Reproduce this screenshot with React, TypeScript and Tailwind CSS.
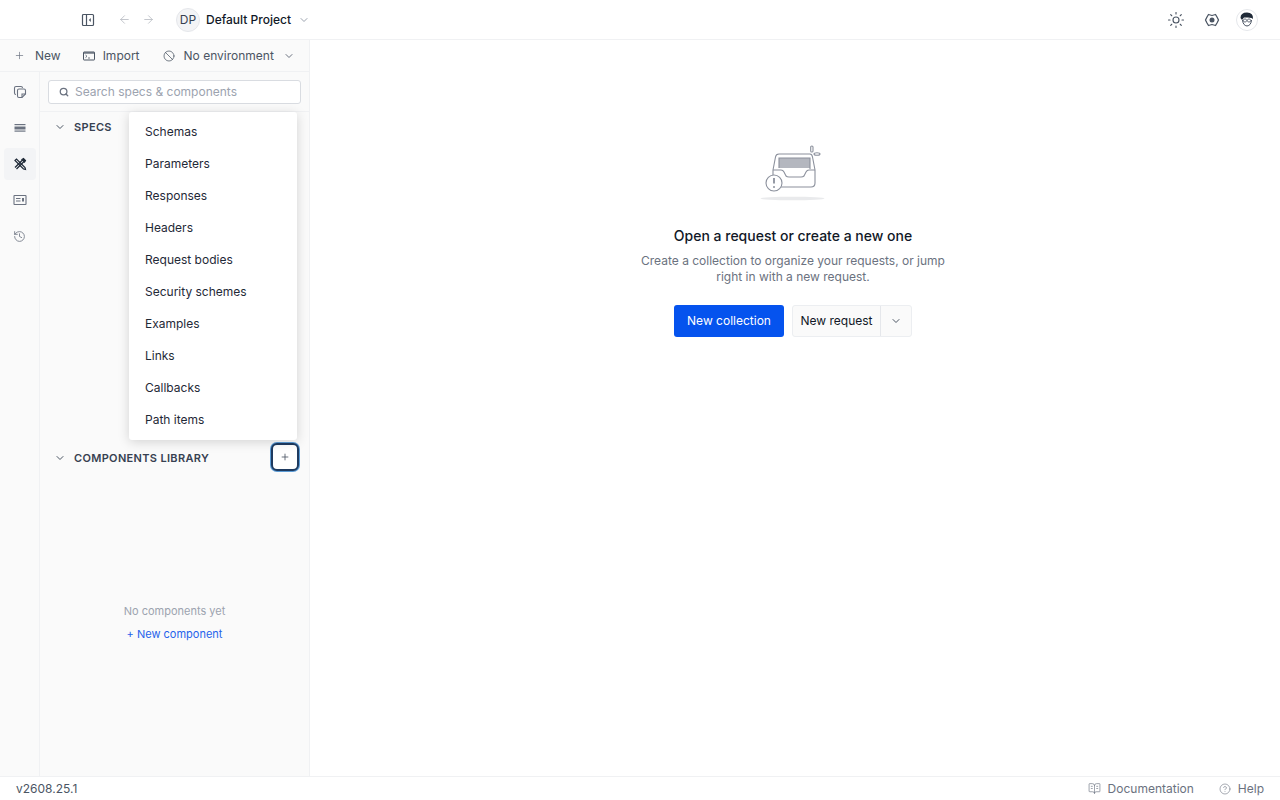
import { ArrowLeft, ArrowRight, Ban, BookOpenText, ChevronDown, CircleHelp, History, Plus, Search, Sun } from "lucide-react";

const menuItems = ["Schemas", "Parameters", "Responses", "Headers", "Request bodies", "Security schemes", "Examples", "Links", "Callbacks", "Path items"]

function InboxArt() {
    return (
        <svg width="72" height="60" viewBox="0 0 72 60" fill="none" stroke="#8b909c" strokeWidth="1.100">
            <ellipse cx="35.500" cy="53.500" rx="32" ry="1.800" fill="#e9eaec" stroke="none" />
            <rect x="22" y="13" width="31" height="10" fill="#b4b7bf" stroke="none" />
            <path d="M16 25 L18.500 12 Q19 9 22 9 L53 9 Q55 9 55.500 12 L58 25 L58 38 Q58 42 54 42 L24 42" />
            <path d="M22 23 L22 13 L53 13 L53 24" />
            <path d="M16 25 L16 30" />
            <path d="M16 25 L24 25 Q26 25 27 27 L29 31 Q30 32 32 32 L44 32 Q46 32 47 31 L49 27 Q50 25 52 25 L58 25" />
            <circle cx="17" cy="38" r="8" fill="#fff" />
            <path d="M17 33 L17 38.500" strokeWidth="1.800" />
            <circle cx="17" cy="42" r="1" fill="#8b909c" stroke="none" />
            <rect x="53.700" y="1" width="2.300" height="6" rx="1.100" />
            <ellipse cx="60" cy="9" rx="3" ry="1.300" />
        </svg>
    )
}

function Avatar() {
    return (
        <svg width="22" height="22" viewBox="0 0 22 22">
            <circle cx="11" cy="11" r="10.500" fill="#fff" stroke="#e5e7eb" />
            <path d="M6.500 11 Q7 16.500 11 17 Q15 16.500 15.500 11" fill="#fff" stroke="#374151" strokeWidth="0.900" />
            <path d="M4.500 9 Q4.500 3.500 11 3.500 Q17.500 3.500 17 10 L15.500 9 L12 8.500 L8 8.500 L6 11 Z" fill="#1f2937" />
            <circle cx="9" cy="11.500" r="1.600" fill="none" stroke="#374151" strokeWidth="0.700" />
            <circle cx="13" cy="11.500" r="1.600" fill="none" stroke="#374151" strokeWidth="0.700" />
        </svg>
    )
}

function SectionHead({ title }: { title: string }) {
    return (
        <div className="flex items-center h-[26px] pl-[14px] shrink-0">
            <ChevronDown size={12} strokeWidth={2} className="text-[#4b5563]" />
            <span className="ml-[8px] text-[11px] font-semibold tracking-[0.03em] text-[#374151]">{title}</span>
        </div>
    )
}

export default function App() {
    return (
        <div className="h-[800px] w-[1280px] flex flex-col bg-white overflow-hidden font-['Inter',sans-serif] text-[#111827]">
            {/* top bar */}
            <header className="h-10 shrink-0 border-b border-[#f0f1f3] flex items-center pl-[81px] pr-[22px]">
                <svg width="14" height="14" viewBox="0 0 14 14" fill="none" stroke="#4b5563" strokeWidth="1.200">
                    <rect x="1.500" y="1.500" width="11" height="11" rx="1" />
                    <path d="M5.500 1.500 V12.500" />
                    <path d="M9.800 5 L7.800 7 L9.800 9 Z" fill="#4b5563" stroke="none" />
                </svg>
                <ArrowLeft size={13} strokeWidth={1.500} className="ml-[23px] text-[#b6bac2]" />
                <ArrowRight size={13} strokeWidth={1.500} className="ml-[11px] text-[#b6bac2]" />
                <div className="ml-[21px] w-6 h-6 rounded-full bg-[#f3f4f6] border border-[#e5e7eb] flex items-center justify-center text-[12px] text-[#374151]">DP</div>
                <span className="ml-[6px] text-[12px] font-medium">Default Project</span>
                <ChevronDown size={12} className="ml-[7px] text-[#9ca3af]" />
                <div className="ml-auto flex items-center">
                    <Sun size={18} strokeWidth={1.500} className="text-[#4b5563]" />
                    <svg width="18" height="18" viewBox="0 0 18 18" fill="none" stroke="#4b5563" strokeWidth="1.300" className="ml-[18px]">
                        <path d="M5.500 3.500 L9 4.500 L12.500 3.500 L14 6 L15.500 9 L14 12 L12.500 14.500 L9 13.500 L5.500 14.500 L4 12 L2.500 9 L4 6 Z" strokeLinejoin="round" />
                        <circle cx="9" cy="9" r="2.500" fill="#4b5563" stroke="none" />
                    </svg>
                    <div className="ml-[15px] flex"><Avatar /></div>
                </div>
            </header>

            <div className="flex-1 flex min-h-0">
                {/* sidebar */}
                <aside className="relative w-[310px] shrink-0 border-r border-[#f0f1f3] bg-[#fafafa] flex flex-col">
                    <div className="h-8 shrink-0 flex items-center pl-[14px] border-b border-[#f0f1f3] text-[12px] text-[#4b5563] whitespace-nowrap">
                        <Plus size={11} strokeWidth={1.500} className="text-[#6b7280]" />
                        <span className="ml-[10px]">New</span>
                        <svg width="12" height="12" viewBox="0 0 12 12" fill="none" stroke="#4b5563" strokeWidth="1" className="ml-[22px]">
                            <rect x="0.500" y="2" width="11" height="8" rx="0.500" />
                            <path d="M0.500 3 H11.500" strokeWidth="1.200" />
                            <path d="M2.500 5 L4 6.300 L2.500 7.600 M5 8 H7" strokeWidth="0.800" />
                        </svg>
                        <span className="ml-[8px]">Import</span>
                        <Ban size={12} strokeWidth={1.500} className="ml-[23px] text-[#4b5563]" />
                        <span className="ml-[9px]">No environment</span>
                        <ChevronDown size={12} className="ml-[9px] text-[#6b7280]" />
                    </div>
                    <div className="flex-1 flex min-h-0">
                        {/* rail */}
                        <nav className="w-10 shrink-0 border-r border-[#f0f1f3] flex flex-col items-center pt-1 gap-1 text-[#6b7280]">
                            <div className="w-8 h-8 flex items-center justify-center">
                                <svg width="14" height="14" viewBox="0 0 14 14" fill="none" stroke="#6b7280" strokeWidth="1.100"><path d="M3 9.500 Q1.500 9.500 1.500 8 L1.500 3 Q1.500 1.500 3 1.500 L8 1.500 Q9.500 1.500 9.500 3" /><path d="M4.500 5.500 Q4.500 4 6 4 L11 4 Q12.500 4 12.500 5.500 L12.500 9 L9 12.500 L6 12.500 Q4.500 12.500 4.500 11 Z" /><path d="M12.500 9 L9 9 L9 12.500" /></svg>
                            </div>
                            <div className="w-8 h-8 flex items-center justify-center">
                                <svg width="14" height="14" viewBox="0 0 14 14" fill="#6b7280"><rect x="1.500" y="3" width="11" height="1.200" /><rect x="1.500" y="5.500" width="11" height="3" /><rect x="1.500" y="9.500" width="11" height="1.200" /></svg>
                            </div>
                            <div className="w-8 h-8 rounded bg-[#f3f4f6] flex items-center justify-center">
                                <svg width="14" height="14" viewBox="0 0 14 14" fill="none" stroke="#1f2937" strokeWidth="1.200"><path d="M2 3.500 L3.500 2 L12 10.500 L12.500 12.500 L10.500 12 Z" /><path d="M2 10.500 L9.500 3" /><path d="M3.500 12 L11 4.500" /><path d="M9 2.500 L10.500 1.500 L12.500 3.500 L11.500 5 Z" fill="#1f2937" /></svg>
                            </div>
                            <div className="w-8 h-8 flex items-center justify-center">
                                <svg width="14" height="14" viewBox="0 0 14 14" fill="none" stroke="#6b7280" strokeWidth="1.100"><rect x="1" y="2.500" width="12" height="9" rx="0.500" /><path d="M3 5.500 H7.500 M3 8 H7.500" /><rect x="9" y="5" width="2" height="3.500" fill="#6b7280" stroke="none" /></svg>
                            </div>
                            <div className="w-8 h-8 flex items-center justify-center"><History size={13} strokeWidth={1.500} /></div>
                        </nav>
                        {/* panel */}
                        <div className="flex-1 min-w-0 flex flex-col">
                            <div className="h-10 shrink-0 pl-2 pr-2 pt-2 border-b border-[#f0f1f3]">
                                <div className="h-6 rounded-[3px] border border-[#d9dce1] bg-white flex items-center pl-[10px]">
                                    <Search size={10} strokeWidth={3} className="text-[#6b7280]" />
                                    <span className="ml-[6px] text-[12px] text-[#9ca3af]">Search specs &amp; components</span>
                                </div>
                            </div>
                            <section className="flex-1 min-h-0 pt-[2px]">
                                <SectionHead title="SPECS" />
                            </section>
                            <section className="flex-1 min-h-0 relative flex flex-col">
                                <SectionHead title="COMPONENTS LIBRARY" />
                                <div className="absolute right-[10px] top-[-2px] w-[28px] h-[28px] rounded-[6px] border-2 border-[#1e3a5f] bg-white shadow-[0_0_0_1px_#5b9bd5] flex items-center justify-center">
                                    <Plus size={10} strokeWidth={2} className="text-[#4b5563]" />
                                </div>
                                <div className="mt-[132px] flex flex-col items-center text-[11px]">
                                    <span className="text-[#9ca3af]">No components yet</span>
                                    <span className="mt-[6px] text-[#2563eb]">+ New component</span>
                                </div>
                            </section>
                        </div>
                    </div>
                    {/* dropdown */}
                    <div className="absolute left-[129px] top-[72px] w-[168px] h-[328px] bg-white rounded-[3px] shadow-[0_2px_12px_rgba(0,0,0,0.16)] py-1 z-10">
                        {menuItems.map((item) => (
                            <div key={item} className="h-8 flex items-center pl-4 text-[12px] text-[#1f2937]">{item}</div>
                        ))}
                    </div>
                </aside>

                {/* main */}
                <main className="flex-1 flex flex-col items-center pt-[105px] pr-1">
                    <InboxArt />
                    <h2 className="mt-5 text-[14px] font-medium">Open a request or create a new one</h2>
                    <p className="mt-[7px] w-[320px] text-center text-[12px] leading-[16px] text-[#6b7280]">Create a collection to organize your requests, or jump right in with a new request.</p>
                    <div className="mt-5 flex items-center gap-2">
                        <button className="h-8 w-[110px] rounded-[3px] bg-[#0553ee] text-white text-[12px]">New collection</button>
                        <div className="h-8 flex rounded-[3px] border border-[#eceef1] bg-[#fafafa] text-[12px]">
                            <span className="w-[88px] flex items-center justify-center border-r border-[#e5e7eb]">New request</span>
                            <span className="w-[30px] flex items-center justify-center"><ChevronDown size={12} className="text-[#4b5563]" /></span>
                        </div>
                    </div>
                </main>
            </div>

            {/* footer */}
            <footer className="h-6 shrink-0 border-t border-[#f0f1f3] flex items-center pl-4 pr-4 text-[12px] text-[#6b7280]">
                <span className="text-[#4b5563]">v2608.25.1</span>
                <BookOpenText size={13} strokeWidth={1.200} className="ml-auto text-[#6b7280]" />
                <span className="ml-[7px]">Documentation</span>
                <CircleHelp size={12} strokeWidth={1.200} className="ml-[25px] text-[#6b7280]" />
                <span className="ml-[7px]">Help</span>
            </footer>
        </div>
    )
}
